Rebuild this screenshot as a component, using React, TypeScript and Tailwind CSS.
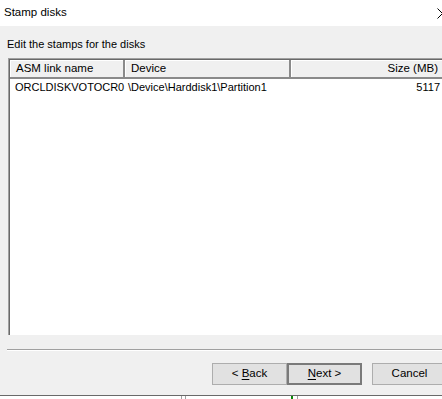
const font = { fontFamily: '"Liberation Sans", Arial, sans-serif' };

function WinButton({ label, hot, isDefault }: { label: string; hot?: string; isDefault?: boolean }) {
  const i = hot ? label.indexOf(hot) : -1;
  return (
    <div
      className={
        "flex h-[22px] w-[75px] shrink-0 items-center justify-center bg-[#e1e1e1] text-[11.5px] text-black " +
        (isDefault ? "border-2 border-[#7a7a7a]" : "border border-[#adadad]")
      }
    >
      {i < 0 ? (
        <span>{label}</span>
      ) : (
        <span>
          {label.slice(0, i)}
          <span className="underline underline-offset-2">{label[i]}</span>
          {label.slice(i + 1)}
        </span>
      )}
    </div>
  );
}

function HeaderCell({ children, w, right }: { children: React.ReactNode; w: string; right?: boolean }) {
  return (
    <div
      className={
        "flex h-[19px] shrink-0 items-center border-b-2 border-r-2 border-b-[#8a8a8a] border-r-[#8a8a8a] bg-[#f0f0f0] px-[6px] shadow-[inset_1px_1px_0_#ffffff] " +
        w +
        (right ? " justify-end" : "")
      }
    >
      {children}
    </div>
  );
}

export default function App() {
  return (
    <div className="relative h-[399px] w-[442px] overflow-hidden bg-[#f0f0f0] text-[11px] text-black" style={font}>
      <div className="flex h-[26px] items-center justify-between bg-white pl-[4px]">
        <span className="text-[11.5px]">Stamp disks</span>
        <svg className="mr-[-6px]" width="11" height="11" viewBox="0 0 11 11">
          <path d="M0.5 0.5 L10.5 10.5 M10.5 0.5 L0.5 10.5" stroke="#000" strokeWidth="1" />
        </svg>
      </div>

      <div className="pl-[7px] pt-[11px] leading-[14px]">Edit the stamps for the disks</div>

      <div className="ml-[8px] mt-[7px] h-[277px] w-[445px] border-l border-t border-[#a0a0a0] bg-white shadow-[inset_1px_1px_0_#696969]">
        <div className="flex pl-[1px] pt-[1px] text-[11.5px]">
          <HeaderCell w="w-[115px]">ASM link name</HeaderCell>
          <HeaderCell w="w-[166px]">Device</HeaderCell>
          <HeaderCell w="w-[155px]" right>
            Size (MB)
          </HeaderCell>
        </div>
        <div className="flex h-[16px] items-center pl-[1px]">
          <div className="w-[115px] shrink-0 pl-[5px]">ORCLDISKVOTOCR0</div>
          <div className="w-[166px] shrink-0 pl-[3px]">\Device\Harddisk1\Partition1</div>
          <div className="w-[155px] shrink-0 pr-[6px] text-right">5117</div>
        </div>
      </div>

      <div className="ml-[7px] mt-[14px] h-[2px] border-t border-[#a0a0a0] bg-white" />

      <div className="mt-[12px] flex pl-[212px]">
        <WinButton label="< Back" hot="B" />
        <WinButton label="Next >" hot="N" isDefault />
        <div className="w-[10px] shrink-0" />
        <WinButton label="Cancel" />
      </div>

      <div className="mt-[10px] h-[4px] border-t border-[#696969] bg-white">
        <div className="flex h-full">
          <div className="ml-[181px] w-px bg-[#a0a0a0]" />
          <div className="ml-[3px] w-px bg-[#a0a0a0]" />
          <div className="ml-[105px] w-[2px] bg-[#0a8a0a]" />
          <div className="ml-[4px] w-px bg-[#a0a0a0]" />
        </div>
      </div>
    </div>
  );
}
